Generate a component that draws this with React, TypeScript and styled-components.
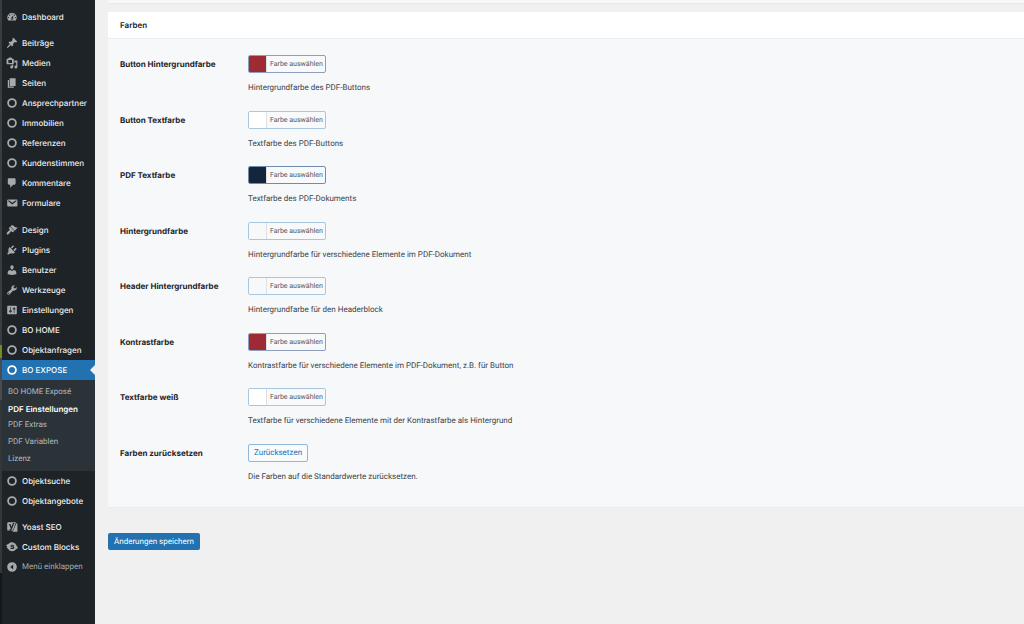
import React from "react";
import styled, { createGlobalStyle, css } from "styled-components";

const bodyFont = `Roboto, "Liberation Sans", sans-serif`;
const strongFont = `Inter, "Liberation Sans", sans-serif`;

const GlobalStyle = createGlobalStyle`
  *, *::before, *::after { box-sizing: border-box; }
  body {
    margin: 0;
    background: #f0f0f1;
    color: #3c434a;
    font-family: ${bodyFont};
    font-size: 8px;
    line-height: 12px;
    text-rendering: geometricPrecision;
  }
  button { font-family: inherit; cursor: pointer; text-rendering: inherit; }
`;

const Page = styled.div`
  display: flex;
  min-height: 100vh;
`;

const WindowEdge = styled.div`
  flex: none;
  width: 2px;
  background: linear-gradient(
    #3a3d3f 0 345px,
    #6f8f1f 345px 358px,
    #4a4d50 358px 400px,
    #33373a 400px 573px,
    #14181b 573px
  );
`;

const Sidebar = styled.nav`
  flex: none;
  width: 93px;
  padding-top: 7px;
  background: #1d2327;
`;

const Menu = styled.ul`
  list-style: none;
  margin: 0;
  padding: 0;
`;

const MenuItem = styled.li<{ $gap?: number }>`
  margin-top: ${(p) => p.$gap ?? 0}px;
`;

const menuRow = css`
  display: flex;
  align-items: center;
  gap: 4px;
  width: 100%;
  height: 20px;
  padding: 0 0 0 4px;
  font-size: 8px;
  line-height: 12px;
  white-space: nowrap;
  text-decoration: none;
`;

const MenuLink = styled.a<{ $current?: boolean }>`
  ${menuRow}
  position: relative;
  color: ${(p) => (p.$current ? "#ffffff" : "#f0f0f1")};
  background: ${(p) => (p.$current ? "#2271b1" : "transparent")};
  font-family: ${strongFont};
  font-weight: 500;

  svg { fill: ${(p) => (p.$current ? "#ffffff" : "#a7aaad")}; }

  ${(p) =>
    p.$current &&
    css`
      &::after {
        content: "";
        position: absolute;
        right: 0;
        top: 5px;
        border: 5px solid transparent;
        border-left-width: 0;
        border-right-color: #f0f0f1;
      }
    `}
`;

const CollapseButton = styled.button`
  ${menuRow}
  border: 0;
  background: none;
  color: #a7aaad;

  svg { fill: #a7aaad; }
`;

const MenuIcon = styled.svg`
  flex: none;
  width: 12px;
  height: 12px;
`;

const Submenu = styled.ul`
  display: flex;
  flex-direction: column;
  list-style: none;
  height: 91px;
  margin: 0;
  padding: 4px 0;
  background: #2c3338;
`;

const SubmenuItem = styled.li`
  flex: 1;
  display: flex;
  align-items: center;
`;

const SubmenuLink = styled.a<{ $current?: boolean }>`
  padding-left: 6px;
  color: ${(p) => (p.$current ? "#ffffff" : "#b4b9be")};
  font-family: ${(p) => (p.$current ? strongFont : bodyFont)};
  font-weight: ${(p) => (p.$current ? 600 : 400)};
  white-space: nowrap;
  text-decoration: none;
`;

const Content = styled.main`
  flex: 1;
  min-width: 0;
  padding-left: 13px;
`;

const PreviousPanel = styled.div`
  height: 4px;
  background: #f6f7f9;
  border-bottom: 1px solid #e8e9eb;
`;

const Panel = styled.section`
  margin-top: 8px;
  background: #f6f8fa;
  box-shadow: 0 1px 1px rgba(0, 0, 0, 0.02);
`;

const PanelTitle = styled.h2`
  margin: 0;
  padding: 7px 12px;
  background: #ffffff;
  border-bottom: 1px solid #ebecee;
  color: #1d2327;
  font-family: ${strongFont};
  font-size: 8px;
  font-weight: 600;
  line-height: 12px;
`;

const Fields = styled.div`
  display: flex;
  flex-direction: column;
  justify-content: space-between;
  min-height: 468px;
  padding: 16px 12px 24px;
`;

const Field = styled.div`
  display: grid;
  grid-template-columns: 128px 1fr;
`;

const FieldLabel = styled.label`
  padding-top: 3px;
  color: #1d2327;
  font-family: ${strongFont};
  font-size: 8px;
  font-weight: 700;
`;

const FieldBody = styled.div`
  display: grid;
  gap: 9px;
  justify-items: start;
`;

const Description = styled.p`
  margin: 0;
  font-size: 8px;
  line-height: 12px;
`;

const ColorButton = styled.button<{ $border: string }>`
  display: flex;
  height: 18px;
  padding: 0;
  overflow: hidden;
  border: 1px solid ${(p) => p.$border};
  border-radius: 2px;
  background: #f8f9fa;
  color: #50575e;
  font-size: 7px;
  line-height: 16px;
`;

const Swatch = styled.span<{ $color: string }>`
  width: 17px;
  height: 16px;
  background: ${(p) => p.$color};
`;

const ColorText = styled.span`
  padding: 0 2px 0 3px;
  border-left: 1px solid #dcdfe3;
`;

const ResetButton = styled.button`
  height: 18px;
  padding: 0 5px;
  border: 1px solid #8fb8d9;
  border-radius: 2px;
  background: #f8fafc;
  color: #2271b1;
  font-size: 8px;
  line-height: 16px;
`;

const SaveButton = styled.button`
  display: block;
  height: 17px;
  margin-top: 26px;
  padding: 0 6px;
  border: 0;
  border-radius: 2px;
  background: #2271b1;
  color: #ffffff;
  font-size: 8px;
  line-height: 17px;
`;

const icons: Record<string, React.ReactNode> = {
  dashboard: (
    <path fillRule="evenodd" d="M3.76 16h12.48A7.998 7.998 0 0 0 10 3a7.998 7.998 0 0 0-6.24 13zM10 4c.55 0 1 .45 1 1s-.45 1-1 1-1-.45-1-1 .45-1 1-1zM6 6c.55 0 1 .45 1 1s-.45 1-1 1-1-.45-1-1 .45-1 1-1zm8 0c.55 0 1 .45 1 1s-.45 1-1 1-1-.45-1-1 .45-1 1-1zm-5.37 5.55L12 7v6c0 1.1-.9 2-2 2s-2-.9-2-2c0-.57.24-1.08.63-1.45zM4 10c.55 0 1 .45 1 1s-.45 1-1 1-1-.45-1-1 .45-1 1-1zm12 0c.55 0 1 .45 1 1s-.45 1-1 1-1-.45-1-1 .45-1 1-1zm-5 3c0-.55-.45-1-1-1s-1 .45-1 1 .45 1 1 1 1-.45 1-1z" />
  ),
  pin: (
    <path d="M10.44 3.02l1.82-1.82 6.36 6.35-1.83 1.82c-1.05-.68-2.48-.57-3.41.36l-.75.75c-.92.93-1.04 2.35-.35 3.41l-1.83 1.82-2.41-2.41-2.8 2.79c-.42.42-3.38 2.71-3.8 2.29s1.86-3.39 2.28-3.81l2.79-2.79L4.1 9.36l1.83-1.82c1.05.69 2.48.57 3.4-.36l.75-.75c.93-.92 1.05-2.35.36-3.41z" />
  ),
  media: (
    <path fillRule="evenodd" d="M13 11V4c0-.55-.45-1-1-1h-1.67L9 1H5L3.67 3H2c-.55 0-1 .45-1 1v7c0 .55.45 1 1 1h10c.55 0 1-.45 1-1zM4 5h6v5H4zM14 6h5v10.5c0 1.380-1.120 2.500-2.500 2.500S14 17.880 14 16.500s1.120-2.500 2.500-2.500c.17 0 .34.02.5.05V9h-3V6zm-4 8.050V13h2v3.500c0 1.380-1.120 2.500-2.500 2.500S7 17.880 7 16.500 8.120 14 9.500 14c.17 0 .34.02.5.05z" />
  ),
  page: <path d="M6 15V2h10v13H6zm-1 1h8v2H3V5h2v11z" />,
  ring: <path fillRule="evenodd" d="M10 2a8 8 0 1 0 0 16 8 8 0 0 0 0-16zm0 3a5 5 0 1 1 0 10 5 5 0 0 1 0-10z" />,
  comment: (
    <path d="M5 2h9c1.1 0 2 .9 2 2v7c0 1.1-.9 2-2 2h-2l-5 5v-5H5c-1.1 0-2-.9-2-2V4c0-1.1.9-2 2-2z" />
  ),
  mail: (
    <path fillRule="evenodd" d="M3.87 4h13.25C18.37 4 19 4.59 19 5.79v8.42c0 1.19-.63 1.79-1.88 1.79H3.87c-1.25 0-1.88-.6-1.88-1.79V5.79c0-1.2.63-1.79 1.88-1.79zm6.62 8.6l6.74-5.53c.24-.2.43-.66.13-1.07-.29-.41-.82-.42-1.17-.17l-5.7 3.86L4.8 5.83c-.35-.25-.88-.24-1.17.17-.3.41-.11.87.13 1.07z" />
  ),
  brush: (
    <path d="M14.48 11.06L7.41 3.99l1.5-1.5c.5-.56 2.3-.47 3.51.32 1.21.8 1.43 1.28 2.91 2.1 1.18.64 2.45 1.26 4.45.85zm-.71.71L6.7 4.7 4.93 6.47c-.39.39-.39 1.02 0 1.41l1.06 1.06c.39.39.39 1.03 0 1.42-.6.6-1.43 1.11-2.21 1.69-.35.26-.7.53-1.01.84C1.43 14.23.4 16.08 1.4 17.07c.99 1 2.84-.03 4.18-1.36.31-.31.58-.66.85-1.02.57-.78 1.08-1.61 1.69-2.21.39-.39 1.02-.39 1.41 0l1.06 1.06c.39.39 1.02.39 1.41 0z" />
  ),
  plug: (
    <path d="M13.11 4.36L9.87 7.6 8 5.73l3.24-3.24c.35-.34 1.05-.2 1.56.32.52.51.66 1.21.31 1.55zm-8 1.77l.91-1.12 9.01 9.01-1.19.84c-.71.71-2.63 1.16-3.82 1.16H6.14L4.9 17.26c-.59.59-1.54.59-2.12 0-.59-.58-.59-1.53 0-2.12l1.24-1.24v-3.88c0-1.13.4-3.19 1.09-3.89zm7.26 3.97l3.24-3.24c.34-.35 1.04-.21 1.55.31.52.51.66 1.21.31 1.55l-3.24 3.25z" />
  ),
  user: (
    <path d="M10 9.25c-2.27 0-2.73-3.44-2.73-3.44C7 4.02 7.82 2 9.97 2c2.16 0 2.98 2.02 2.71 3.81 0 0-.41 3.44-2.68 3.44zm0 2.57L12.72 10c2.39 0 4.52 2.33 4.52 4.53v2.49s-3.65 1.13-7.24 1.13c-3.65 0-7.24-1.13-7.24-1.13v-2.49c0-2.25 1.94-4.48 4.47-4.48z" />
  ),
  wrench: (
    <path fillRule="evenodd" d="M16.68 9.77c-1.34 1.34-3.3 1.67-4.95.99l-5.41 6.52c-.99.99-2.59.99-3.58 0s-.99-2.59 0-3.57l6.52-5.42c-.68-1.65-.35-3.61.99-4.95 1.28-1.28 3.12-1.62 4.72-1.06l-2.89 2.89 2.82 2.82 2.86-2.87c.53 1.58.18 3.39-1.08 4.65zM3.81 16.21c.4.39 1.04.39 1.43 0 .4-.4.4-1.04 0-1.43-.39-.4-1.03-.4-1.43 0-.39.39-.39 1.03 0 1.43z" />
  ),
  sliders: (
    <path fillRule="evenodd" d="M18 16V4c0-.55-.45-1-1-1H3c-.55 0-1 .45-1 1v12c0 .55.45 1 1 1h14c.55 0 1-.45 1-1zM8 11h1c.55 0 1 .45 1 1s-.45 1-1 1H8v1.5c0 .28-.22.5-.5.5s-.5-.22-.5-.5V13H6c-.55 0-1-.45-1-1s.45-1 1-1h1V5.5c0-.28.22-.5.5-.5s.5.22.5.5V11zm5-2h-1c-.55 0-1-.45-1-1s.45-1 1-1h1V5.5c0-.28.22-.5.5-.5s.5.22.5.5V7h1c.55 0 1 .45 1 1s-.45 1-1 1h-1v5.5c0 .28-.22.5-.5.5s-.5-.22-.5-.5V9z" />
  ),
  yoast: (
    <path fillRule="evenodd" d="M4 2h12.500l-5 14H4a2 2 0 0 1-2-2V4a2 2 0 0 1 2-2zM4.800 5l3.200 7.500c-.4 1.200-1.200 1.700-2.600 1.700V16.500c2.500 0 4-1.200 5-4L14 3.500h-2.500L9.400 9.500 7.400 5zM17.500 3.500L19 4.500V18H10.500c1-.6 1.700-1.500 2.200-2.800z" />
  ),
  blocks: (
    <path fillRule="evenodd" d="M0 7l4.500-2.500a8 8 0 0 1 13 3L20 12l-3 1.500A8 8 0 0 1 3 12.500L1 11l1.200-1.500zM14 7.500c-2-2-6.500-1.500-6.500.8 0 2.300 4.500 1.500 4.500 2.700 0 .9-2.300 1.100-4 0l-.8 1.500c2.600 1.800 6.800 1 6.800-1.600 0-2.500-4.600-1.800-4.600-2.900 0-.8 2-1 3.300.6z" />
  ),
  collapse: <path fillRule="evenodd" d="M10 2a8 8 0 1 0 0 16 8 8 0 0 0 0-16zm2 4v8l-5-4z" />,
};

function Icon({ name }: { name: string }) {
  return (
    <MenuIcon viewBox="0 0 20 20" aria-hidden="true">
      {icons[name]}
    </MenuIcon>
  );
}

type Entry = { label: string; icon: string; gap?: number; sub?: string[] };

const entries: Entry[] = [
  { label: "Dashboard", icon: "dashboard" },
  { label: "Beiträge", icon: "pin", gap: 6 },
  { label: "Medien", icon: "media" },
  { label: "Seiten", icon: "page" },
  { label: "Ansprechpartner", icon: "ring" },
  { label: "Immobilien", icon: "ring" },
  { label: "Referenzen", icon: "ring" },
  { label: "Kundenstimmen", icon: "ring" },
  { label: "Kommentare", icon: "comment" },
  { label: "Formulare", icon: "mail" },
  { label: "Design", icon: "brush", gap: 7 },
  { label: "Plugins", icon: "plug" },
  { label: "Benutzer", icon: "user" },
  { label: "Werkzeuge", icon: "wrench" },
  { label: "Einstellungen", icon: "sliders" },
  { label: "BO HOME", icon: "ring" },
  { label: "Objektanfragen", icon: "ring" },
  {
    label: "BO EXPOSE",
    icon: "ring",
    sub: ["BO HOME Exposé", "PDF Einstellungen", "PDF Extras", "PDF Variablen", "Lizenz"],
  },
  { label: "Objektsuche", icon: "ring" },
  { label: "Objektangebote", icon: "ring" },
  { label: "Yoast SEO", icon: "yoast", gap: 6 },
  { label: "Custom Blocks", icon: "blocks" },
];

const colors = [
  { id: "button-bg", label: "Button Hintergrundfarbe", color: "#9e2a33", border: "#8f9dbd", text: "Hintergrundfarbe des PDF-Buttons" },
  { id: "button-text", label: "Button Textfarbe", color: "#ffffff", border: "#a9c6dd", text: "Textfarbe des PDF-Buttons" },
  { id: "pdf-text", label: "PDF Textfarbe", color: "#14273a", border: "#6d8dab", text: "Textfarbe des PDF-Dokuments" },
  { id: "bg", label: "Hintergrundfarbe", color: "#f6f8fa", border: "#a9c6dd", text: "Hintergrundfarbe für verschiedene Elemente im PDF-Dokument" },
  { id: "header-bg", label: "Header Hintergrundfarbe", color: "#f6f8fa", border: "#a9c6dd", text: "Hintergrundfarbe für den Headerblock" },
  { id: "contrast", label: "Kontrastfarbe", color: "#9e2a33", border: "#8f9dbd", text: "Kontrastfarbe für verschiedene Elemente im PDF-Dokument, z.B. für Button" },
  { id: "white-text", label: "Textfarbe weiß", color: "#ffffff", border: "#a9c6dd", text: "Textfarbe für verschiedene Elemente mit der Kontrastfarbe als Hintergrund" },
];

export default function App() {
  return (
    <>
      <GlobalStyle />
      <Page>
        <WindowEdge />
        <Sidebar>
          <Menu>
            {entries.map((e) => (
              <MenuItem key={e.label} $gap={e.gap}>
                <MenuLink href="#" $current={!!e.sub}>
                  <Icon name={e.icon} />
                  {e.label}
                </MenuLink>
                {e.sub && (
                  <Submenu>
                    {e.sub.map((s) => (
                      <SubmenuItem key={s}>
                        <SubmenuLink href="#" $current={s === "PDF Einstellungen"}>
                          {s}
                        </SubmenuLink>
                      </SubmenuItem>
                    ))}
                  </Submenu>
                )}
              </MenuItem>
            ))}
            <MenuItem>
              <CollapseButton type="button">
                <Icon name="collapse" />
                Menü einklappen
              </CollapseButton>
            </MenuItem>
          </Menu>
        </Sidebar>
        <Content>
          <PreviousPanel />
          <Panel>
            <PanelTitle>Farben</PanelTitle>
            <Fields>
              {colors.map((c) => (
                <Field key={c.id}>
                  <FieldLabel htmlFor={c.id}>{c.label}</FieldLabel>
                  <FieldBody>
                    <ColorButton id={c.id} type="button" $border={c.border}>
                      <Swatch $color={c.color} />
                      <ColorText>Farbe auswählen</ColorText>
                    </ColorButton>
                    <Description>{c.text}</Description>
                  </FieldBody>
                </Field>
              ))}
              <Field>
                <FieldLabel htmlFor="reset">Farben zurücksetzen</FieldLabel>
                <FieldBody>
                  <ResetButton id="reset" type="button">Zurücksetzen</ResetButton>
                  <Description>Die Farben auf die Standardwerte zurücksetzen.</Description>
                </FieldBody>
              </Field>
            </Fields>
          </Panel>
          <SaveButton type="submit">Änderungen speichern</SaveButton>
        </Content>
      </Page>
    </>
  );
}
